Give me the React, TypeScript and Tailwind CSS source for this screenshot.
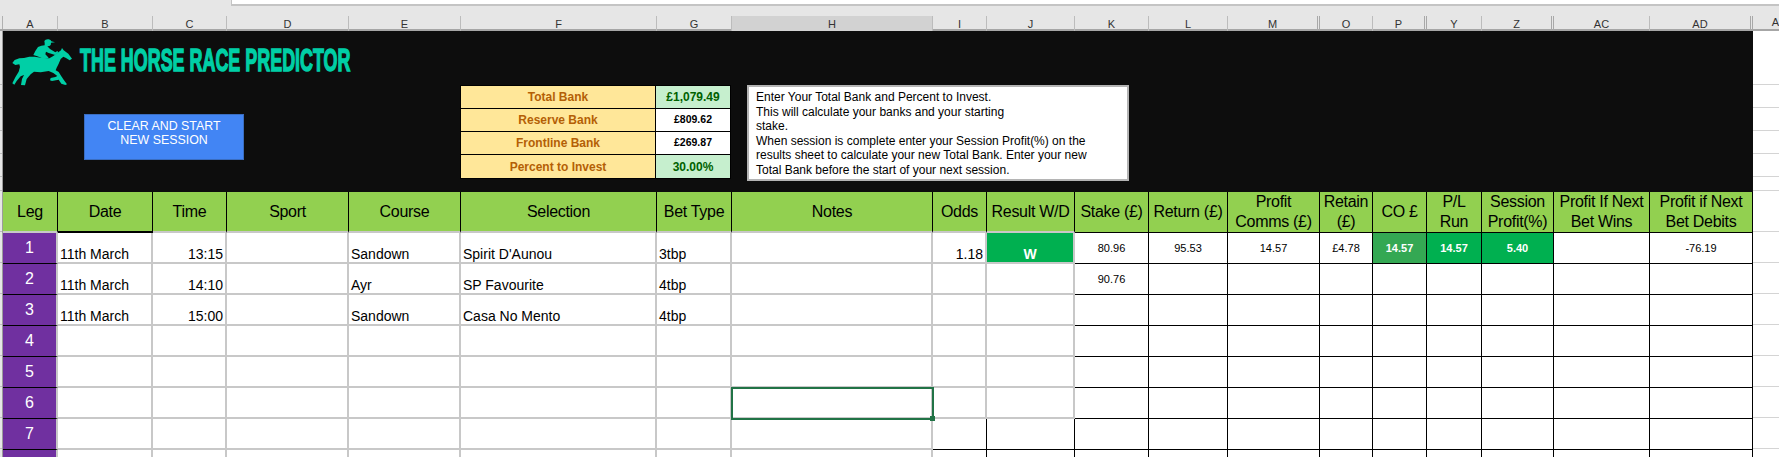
const GRID = "grid grid-cols-[55px_95px_74px_122px_112px_196px_75px_201px_54px_88px_74px_79px_92px_53px_54px_55px_72px_96px_103px]";

const letters = ["A","B","C","D","E","F","G","H","I","J","K","L","M","O","P","Y","Z","AC","AD"];
const doubled = ["M","P","Z","AD"];
const headers: { t: string; c: string }[] = [
  { t: "Leg", c: "border-b-2 border-b-[#c8c8c8]" },
  { t: "Date", c: "border-b-2 border-b-black" },
  { t: "Time", c: "border-b-2 border-b-[#c8c8c8]" },
  { t: "Sport", c: "border-b-2 border-b-[#c8c8c8]" },
  { t: "Course", c: "border-b-2 border-b-[#c8c8c8]" },
  { t: "Selection", c: "border-b-2 border-b-[#c8c8c8]" },
  { t: "Bet Type", c: "border-b-2 border-b-[#c8c8c8]" },
  { t: "Notes", c: "border-b-2 border-b-[#c8c8c8]" },
  { t: "Odds", c: "border-b-2 border-b-[#c8c8c8]" },
  { t: "Result W/D", c: "border-b-2 border-b-[#c8c8c8]" },
  { t: "Stake (£)", c: "border-b border-b-black" },
  { t: "Return (£)", c: "border-b border-b-black" },
  { t: "Profit\nComms (£)", c: "border-b border-b-black" },
  { t: "Retain\n(£)", c: "border-b border-b-black" },
  { t: "CO £", c: "border-b border-b-black" },
  { t: "P/L\nRun", c: "border-b border-b-black" },
  { t: "Session\nProfit(%)", c: "border-b border-b-black" },
  { t: "Profit If Next\nBet Wins", c: "border-b border-b-black" },
  { t: "Profit if Next\nBet Debits", c: "border-b border-b-black" },
];

const rows: string[][] = [
  ["11th March", "13:15", "", "Sandown", "Spirit D'Aunou", "3tbp", "", "1.18", "W", "80.96", "95.53", "14.57", "£4.78", "14.57", "14.57", "5.40", "", "-76.19"],
  ["11th March", "14:10", "", "Ayr", "SP Favourite", "4tbp", "", "", "", "90.76", "", "", "", "", "", "", "", ""],
  ["11th March", "15:00", "", "Sandown", "Casa No Mento", "4tbp", "", "", "", "", "", "", "", "", "", "", "", ""],
  Array(18).fill(""),
  Array(18).fill(""),
  Array(18).fill(""),
  Array(18).fill(""),
  Array(18).fill(""),
];

const stripHeights = ["h-[54px]", "h-[23px]", "h-[23px]", "h-[23px]", "h-[23px]", "h-[14px]", "h-[41px]", "h-[31px]", "h-[31px]", "h-[31px]", "h-[31px]", "h-[31px]", "h-[31px]", "h-[31px]"];

function Strip({ className, lineClass }: { className: string; lineClass: string }) {
  return (
    <div className={className}>
      {stripHeights.map((h, i) => (
        <div key={i} className={`${h} border-b ${lineClass}`} />
      ))}
    </div>
  );
}

function Horse() {
  return (
    <svg viewBox="30 20 195 150" className="w-[65px] h-[50px] shrink-0" fill="#00cfa6">
      <path d="M37 98 L44 89 L58 84 L72 83 L88 79 L104 79 L128 83 L148 84 L160 77 L172 68 L183 60 L186 53 L191 60 L205 70 L216 85 L209 90 L198 83 L190 79 L182 86 L176 100 L170 112 L167 120 L176 125 L184 138 L192 150 L201 162 L196 164 L184 160 L176 148 L156 152 L150 150 L152 143 L166 140 L172 137 L160 128 L146 122 L122 126 L102 124 L92 132 L80 146 L75 165 L63 164 L66 146 L72 134 L62 138 L50 152 L43 163 L37 159 L46 141 L56 124 L60 110 L58 102 L46 104 Z" />
      <path d="M133 32 Q136 26 146 27 Q153 29 154 33 L165 36 L153 37 Q154 44 148 47 L142 48 L150 56 L166 66 L172 62 L175 66 L166 74 L146 68 L138 64 L136 72 L146 82 L132 86 L112 78 L100 74 L106 62 L114 50 L124 46 L134 45 L134 38 Z" />
    </svg>
  );
}

function BankTable() {
  const data = [
    ["Total Bank", "£1,079.49", "bg-[#c6efce] text-[#006100] text-[12px]"],
    ["Reserve Bank", "£809.62", "bg-white text-black text-[10.5px]"],
    ["Frontline Bank", "£269.87", "bg-white text-black text-[10.5px]"],
    ["Percent to Invest", "30.00%", "bg-[#c6efce] text-[#006100] text-[12px]"],
  ];
  return (
    <div className="w-[271px] mt-[54px] shrink-0 flex flex-col border border-black self-start">
      {data.map(([label, value, cls], i) => (
        <div key={label} className={`flex h-[23px] ${i < 3 ? "border-b border-black" : ""}`}>
          <div className="w-[195px] border-r border-black bg-[#ffe799] text-[#b45f06] text-[12px] font-bold flex items-center justify-center">
            {label}
          </div>
          <div className={`flex-1 font-bold flex items-center justify-center ${cls}`}>{value}</div>
        </div>
      ))}
    </div>
  );
}

function InfoBox() {
  return (
    <div className="ml-[16px] mt-[54px] w-[382px] h-[96px] shrink-0 self-start bg-white border-2 border-[#b4b4b4] pl-[7px] pt-[3px] text-[12px] leading-[14.6px] text-black">
      <div>Enter Your Total Bank and Percent to Invest.</div>
      <div>This will calculate your banks and your starting</div>
      <div>stake.</div>
      <div>When session is complete enter your Session Profit(%) on the</div>
      <div>results sheet to calculate your new Total Bank. Enter your new</div>
      <div>Total Bank before the start of your next session.</div>
    </div>
  );
}

function Row({ index, values }: { index: number; values: string[] }) {
  const late = index >= 6;
  return (
    <div className={`${GRID} h-[31px]`}>
      <div className="bg-[#7030a0] text-white text-[16px] flex items-center justify-center border-b border-b-black border-r-2 border-r-[#c8c8c8]">
        {index < 7 ? index + 1 : ""}
      </div>
      {values.map((v, c) => {
        if (c <= 6) {
          const align = c === 1 ? "justify-end pr-[2px]" : "justify-start pl-[2px]";
          return (
            <div key={c} className={`relative bg-white flex items-end ${align} border-r-2 border-b-2 border-[#c8c8c8] text-[14px] leading-[16px] text-black`}>
              {v}
              {c === 6 && index === 5 && (
                <div className="absolute -left-[1px] -top-[1px] w-[203px] h-[33px] border-2 border-[#217346] z-10">
                  <div className="absolute -right-[3px] -bottom-[3px] w-[5px] h-[5px] bg-[#217346]" />
                </div>
              )}
            </div>
          );
        }
        if (c === 7) {
          return (
            <div key={c} className={`bg-white flex items-end justify-end pr-[2px] text-[14px] leading-[16px] text-black ${late ? "border-r border-b border-black" : "border-r-2 border-b-2 border-[#c8c8c8]"}`}>
              {v}
            </div>
          );
        }
        if (c === 8) {
          if (v === "W") {
            return (
              <div key={c} className="flex items-end justify-center bg-[#00b050] border-r-2 border-b-2 border-[#c8c8c8] text-white font-bold text-[14px] leading-[15px]">
                W
              </div>
            );
          }
          return <div key={c} className={`bg-white ${late ? "border-r border-b border-black" : "border-r-2 border-b-2 border-[#c8c8c8]"}`} />;
        }
        let fill = "bg-white text-black font-normal";
        if (v && c === 13) fill = "bg-[#34a853] text-white font-bold";
        if (v && (c === 14 || c === 15)) fill = "bg-[#00b050] text-white font-bold";
        return (
          <div key={c} className={`flex items-center justify-center border-r border-b border-black text-[11px] ${fill}`}>
            {v}
          </div>
        );
      })}
    </div>
  );
}

export default function App() {
  return (
    <div className="w-[1779px] h-[457px] overflow-hidden bg-[#e6e6e6] font-['Liberation_Sans',Arial,sans-serif]">
      <div className="h-[16px] pl-[231px]">
        <div className="h-[6px] bg-white border-b-2 border-l border-[#c4c4c4]" />
      </div>
      <div className="flex h-[15px] border-b-2 border-[#a6a6a6]">
        <div className="w-[3px] shrink-0 border-r border-[#b0b0b0]" />
        <div className={`${GRID} w-[1750px] shrink-0`}>
          {letters.map((l) => (
            <div
              key={l}
              className={`flex items-center justify-center text-[11px] text-[#333333] ${l === "H" ? "bg-[#d2d2d2] border-b-2 -mb-[2px] border-b-[#217346]" : ""} ${doubled.includes(l) ? "border-r-[3px] border-double border-r-[#a8a8a8]" : "border-r border-r-[#bcbcbc]"}`}
            >
              {l}
            </div>
          ))}
        </div>
        <div className="ml-[3px] flex-1 flex justify-end items-center text-[11px] text-[#333333]">A</div>
      </div>
      <div className="flex">
        <Strip className="w-[3px] shrink-0 border-r border-[#9c9c9c]" lineClass="border-[#bdbdbd]" />
        <div className="w-[1750px] shrink-0">
          <div className="h-[161px] bg-[#0d0d0d] flex">
            <div className="w-[457px] shrink-0">
              <div className="flex items-start pl-[7px] pt-[6px] h-[56px]">
                <Horse />
                <span className="ml-[5px] mt-[5px] inline-block origin-left scale-x-[0.56] whitespace-nowrap text-[32px] leading-[36px] font-bold text-[#00cfa6] [-webkit-text-stroke:1.5px_#00cfa6]">
                  THE HORSE RACE PREDICTOR
                </span>
              </div>
              <div className="ml-[81px] mt-[27px] w-[160px] h-[46px] bg-[#4285f4] border border-[#3a6dc0] flex flex-col pt-[4px] items-center text-white text-[12.4px] leading-[14px]">
                <span>CLEAR AND START</span>
                <span>NEW SESSION</span>
              </div>
            </div>
            <BankTable />
            <InfoBox />
          </div>
          <div className={`${GRID} h-[41px] bg-[#92d050]`}>
            {headers.map((h, i) => (
              <div
                key={i}
                className={`flex items-center justify-center text-center whitespace-pre-line text-[16px] tracking-[-0.3px] leading-[20px] text-black border-r border-r-black ${h.c}`}
              >
                {h.t}
              </div>
            ))}
          </div>
          {rows.map((v, i) => (
            <Row key={i} index={i} values={v} />
          ))}
        </div>
        <Strip className="flex-1 bg-white" lineClass="border-[#d4d4d4]" />
      </div>
    </div>
  );
}
